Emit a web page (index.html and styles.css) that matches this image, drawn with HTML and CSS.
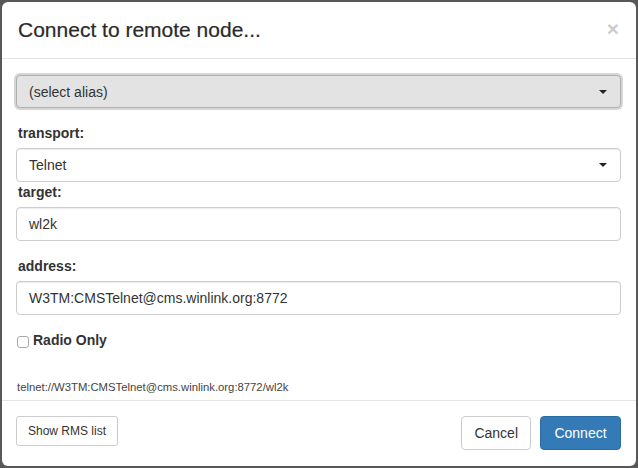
FILE: index.html
```html
<!DOCTYPE html>
<html>
<head>
<meta charset="utf-8">
<link rel="stylesheet" href="styles.css">
</head>
<body>
<div class="modal">
  <div class="modal-header">
    <h4 class="title">Connect to remote node...</h4>
    <span class="close">&times;</span>
  </div>
  <div class="modal-body">
    <div class="select select-alias"><span>(select alias)</span><span class="caret"></span></div>
    <label class="lbl">transport:</label>
    <div class="select"><span>Telnet</span><span class="caret"></span></div>
    <label class="lbl">target:</label>
    <div class="input">wl2k</div>
    <label class="lbl">address:</label>
    <div class="input">W3TM:CMSTelnet@cms.winlink.org:8772</div>
    <div class="checkbox"><span class="box"></span><span class="cb-label">Radio Only</span></div>
    <div class="url">telnet://W3TM:CMSTelnet@cms.winlink.org:8772/wl2k</div>
  </div>
  <div class="modal-footer">
    <button class="btn btn-sm">Show RMS list</button>
    <div class="spacer"></div>
    <button class="btn">Cancel</button>
    <button class="btn btn-primary">Connect</button>
  </div>
</div>
</body>
</html>
```
FILE: styles.css
```css
* { box-sizing: border-box; }
html, body { margin: 0; padding: 0; }
body {
  background: #585858;
  font-family: "Liberation Sans", Arial, sans-serif;
  color: #333;
  font-size: 14px;
  line-height: 20px;
  padding: 2px;
}
.modal {
  background: #fff;
  border-radius: 6px;
  width: 634px;
  height: 464px;
  display: flex;
  flex-direction: column;
}
.modal-header {
  padding: 15px;
  border-bottom: 1px solid #e5e5e5;
  display: flex;
  align-items: center;
  height: 57px;
}
.title {
  margin: 0;
  font-size: 21px;
  font-weight: normal;
  line-height: 26px;
  flex: 1;
  padding-left: 1px;
  color: #2a2a2a;
  -webkit-text-stroke: 0.2px #2a2a2a;
}
.close {
  font-size: 21px;
  font-weight: bold;
  color: #000;
  opacity: 0.2;
  line-height: 1;
  margin-top: -4px;
  margin-right: 2px;
}
.modal-body {
  padding: 15px 15px 0 14px;
  flex: 1;
  display: flex;
  flex-direction: column;
}
.select, .input {
  height: 34px;
  border: 1px solid #ccc;
  border-radius: 4px;
  padding: 6px 12px;
  display: flex;
  align-items: center;
  justify-content: space-between;
  box-shadow: inset 0 1px 1px rgba(0,0,0,0.075);
  background: #fff;
}
.select-alias {
  background: #e3e3e3;
  border: 1px solid #b0b0b0;
  box-shadow: 0 0 0 2px #d6d6d6;
  height: 33px;
  margin-top: 1px;
  margin-bottom: 15px;
}
.caret {
  width: 0;
  height: 0;
  border-left: 4px solid transparent;
  border-right: 4px solid transparent;
  border-top: 4px solid #222;
  margin-right: 1px;
}
.lbl {
  display: block;
  font-weight: bold;
  margin-bottom: 5px;
  padding-left: 2px;
}
.input + .lbl { margin-top: 15px; }
.checkbox {
  margin-top: 15px;
  display: flex;
  align-items: center;
  height: 20px;
}
.box {
  width: 12px;
  height: 12px;
  border: 1px solid #aaa;
  border-radius: 3px;
  margin: 4px 4px 0 1px;
}
.cb-label { font-weight: bold; }
.url {
  margin-top: 29px;
  font-size: 11.3px;
  line-height: 16px;
  color: #444;
  padding-left: 1px;
}
.modal-footer {
  border-top: 1px solid #e5e5e5;
  padding: 15px 15px 16px 14px;
  display: flex;
  align-items: flex-start;
  gap: 9px;
}
.spacer { flex: 1; }
.btn {
  font-family: inherit;
  font-size: 14px;
  line-height: 20px;
  height: 34px;
  padding: 6px 12px;
  border: 1px solid #ccc;
  border-radius: 4px;
  background: #fff;
  color: #333;
}
.btn-sm {
  font-size: 12px;
  height: 30px;
  padding: 5px 10px;
  line-height: 18px;
  width: 102px;
  border-radius: 3px;
}
.btn-primary {
  background: #337ab7;
  border-color: #2e6da4;
  color: #fff;
  width: 81px;
}
```
